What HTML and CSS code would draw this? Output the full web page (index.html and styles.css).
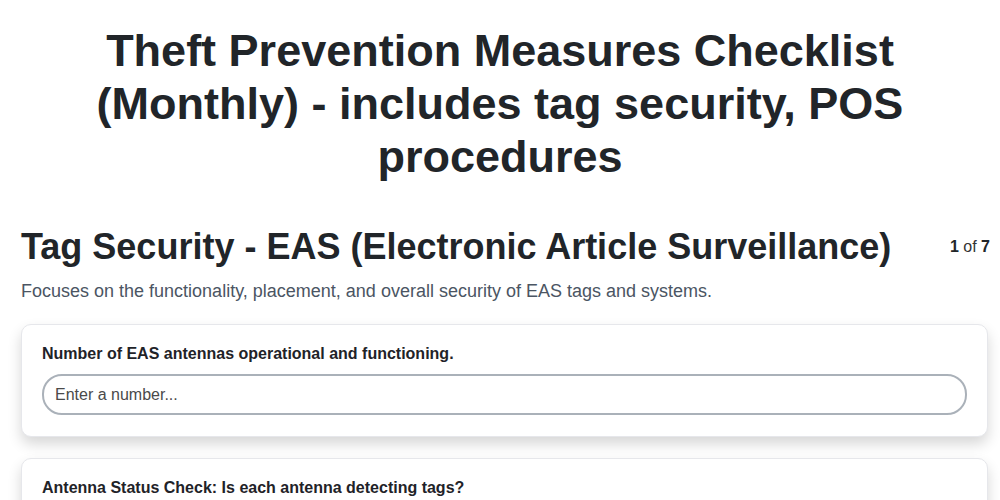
FILE: index.html
```html
<!DOCTYPE html>
<html>
<head>
<meta charset="utf-8">
<link rel="stylesheet" href="styles.css">
</head>
<body>
<h1 class="title">Theft Prevention Measures Checklist (Monthly) - includes tag security, POS procedures</h1>
<div class="section">
  <div class="section-head">
    <h2 class="section-title">Tag Security - EAS (Electronic Article Surveillance)</h2>
    <div class="pager"><b>1</b> of <b>7</b></div>
  </div>
  <p class="section-desc">Focuses on the functionality, placement, and overall security of EAS tags and systems.</p>
  <div class="card">
    <label class="q-label">Number of EAS antennas operational and functioning.</label>
    <input class="q-input" type="text" placeholder="Enter a number...">
  </div>
  <div class="card">
    <label class="q-label">Antenna Status Check: Is each antenna detecting tags?</label>
    <input class="q-input" type="text" placeholder="Enter a number...">
  </div>
</div>
</body>
</html>
```
FILE: styles.css
```css
html, body {
  margin: 0;
  padding: 0;
  background: #ffffff;
  font-family: "Liberation Sans", Arial, sans-serif;
  color: #1f2328;
}
.title {
  margin: 24px 60px 0;
  text-align: center;
  font-size: 45px;
  line-height: 53px;
  font-weight: 700;
  color: #212529;
}
.section {
  padding: 0 12px 0 21px;
  margin-top: 42px;
}
.section-head {
  display: flex;
  justify-content: space-between;
  align-items: center;
}
.section-title {
  margin: 0;
  font-size: 36px;
  line-height: 44px;
  font-weight: 700;
  color: #212529;
}
.pager {
  font-size: 16px;
  color: #333;
  margin-right: -2px;
}
.pager b { color: #212529; }
.section-desc {
  margin: 12px 0 22px;
  font-size: 18px;
  color: #4b5563;
}
.card {
  background: #fff;
  border: 1px solid #e6e7eb;
  border-radius: 10px;
  box-shadow: 0 7px 14px rgba(0,0,0,0.16);
  padding: 20px 20px 21px;
  margin-bottom: 21px;
}
.q-label {
  display: block;
  font-size: 16px;
  font-weight: 700;
  color: #1f2328;
  margin-bottom: 11px;
}
.q-input {
  display: block;
  box-sizing: border-box;
  width: 100%;
  height: 41px;
  border: 2px solid #aab1b9;
  border-radius: 20px;
  padding: 0 11px;
  font-family: "Liberation Sans", Arial, sans-serif;
  font-size: 16px;
  color: #333;
  background: #fff;
  outline: none;
}
.q-input::placeholder { color: #4a4a4a; }
```
